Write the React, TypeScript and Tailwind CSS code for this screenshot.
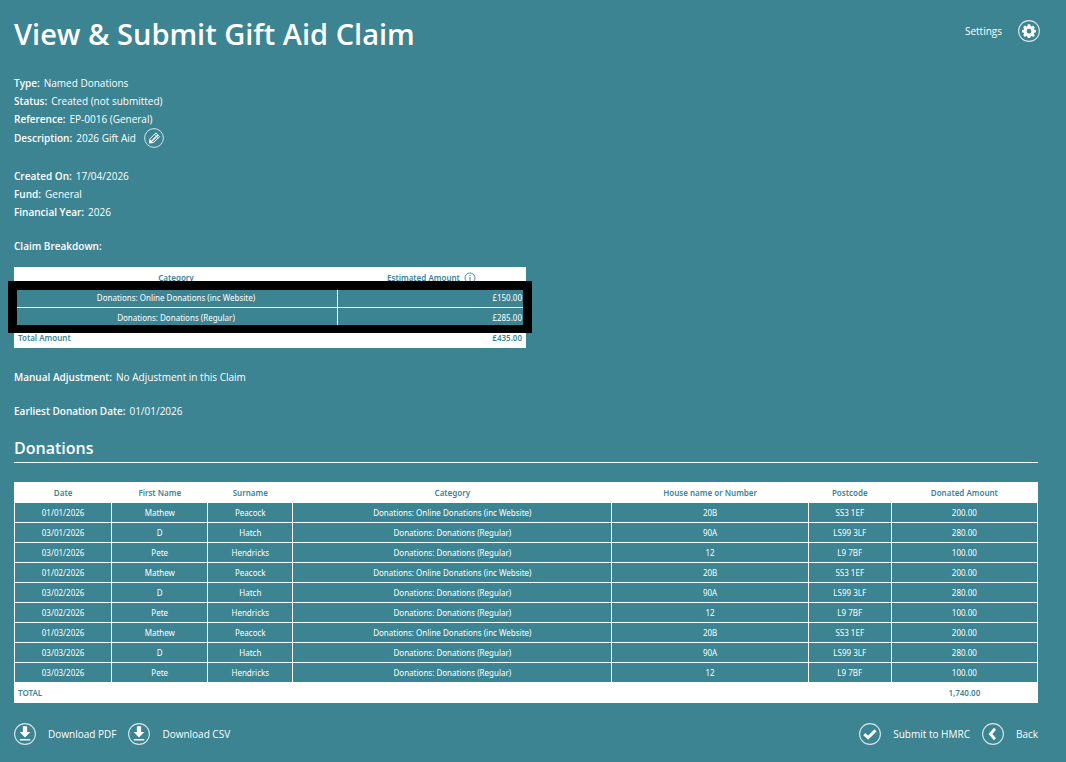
import React from "react";

const donations = [
  ["01/01/2026", "Mathew", "Peacock", "Donations: Online Donations (inc Website)", "20B", "SS3 1EF", "200.00"],
  ["03/01/2026", "D", "Hatch", "Donations: Donations (Regular)", "90A", "LS99 3LF", "280.00"],
  ["03/01/2026", "Pete", "Hendricks", "Donations: Donations (Regular)", "12", "L9 7BF", "100.00"],
  ["01/02/2026", "Mathew", "Peacock", "Donations: Online Donations (inc Website)", "20B", "SS3 1EF", "200.00"],
  ["03/02/2026", "D", "Hatch", "Donations: Donations (Regular)", "90A", "LS99 3LF", "280.00"],
  ["03/02/2026", "Pete", "Hendricks", "Donations: Donations (Regular)", "12", "L9 7BF", "100.00"],
  ["01/03/2026", "Mathew", "Peacock", "Donations: Online Donations (inc Website)", "20B", "SS3 1EF", "200.00"],
  ["03/03/2026", "D", "Hatch", "Donations: Donations (Regular)", "90A", "LS99 3LF", "280.00"],
  ["03/03/2026", "Pete", "Hendricks", "Donations: Donations (Regular)", "12", "L9 7BF", "100.00"],
];

const columns = ["Date", "First Name", "Surname", "Category", "House name or Number", "Postcode", "Donated Amount"];

function Field({ label, children }: { label: string; children?: React.ReactNode }) {
  return (
    <div className="flex items-center gap-1">
      <dt className="font-semibold">{label}:</dt>
      <dd className="flex items-center">{children}</dd>
    </div>
  );
}

function Circle({ children }: { children: React.ReactNode }) {
  return (
    <svg viewBox="0 0 22 22" className="size-[22px] shrink-0" fill="none" aria-hidden="true">
      <circle cx="11" cy="11" r="10.4" stroke="#d5e5e8" strokeWidth="1.1" />
      {children}
    </svg>
  );
}

function DownloadIcon() {
  return (
    <Circle>
      <path d="M8.9 3.2h4.2v5.8h3.2L11 14.6 5.7 9h3.2z" fill="#fff" />
      <path d="M5.8 16.8h10.4" stroke="#fff" strokeWidth="1.4" />
    </Circle>
  );
}

function App() {
  return (
    <div className="min-h-screen bg-[#3c8492] pl-[14px] pr-7 pt-4 pb-4 font-['Open_Sans',sans-serif] text-[10px] leading-[18px] text-white">
      <header className="flex items-start justify-between">
        <h1 className="text-[29px] leading-9 font-semibold">View &amp; Submit Gift Aid Claim</h1>
        <button className="flex items-center gap-4 pt-1 -mr-[2px]">
          Settings
          <Circle>
            <path
              d="M9.8 4.3h2.4l.4 1.7 1 .4 1.5-.9 1.7 1.7-.9 1.5.4 1 1.7.4v2.2l-1.7.4-.4 1 .9 1.5-1.7 1.7-1.5-.9-1 .4-.4 1.7H9.8l-.4-1.7-1-.4-1.5.9-1.7-1.7.9-1.5-.4-1-1.7-.4v-2.2l1.7-.4.4-1-.9-1.5 1.7-1.7 1.5.9 1-.4zM11 8.8a2.4 2.4 0 1 0 0 4.8 2.4 2.4 0 0 0 0-4.8z"
              fill="#fff"
              fillRule="evenodd"
            />
          </Circle>
        </button>
      </header>

      <dl className="mt-[22px]">
        <Field label="Type">Named Donations</Field>
        <Field label="Status">Created (not submitted)</Field>
        <Field label="Reference">EP-0016 (General)</Field>
        <Field label="Description">
          2026 Gift Aid
          <button className="ml-2" aria-label="Edit description">
            <svg viewBox="0 0 20 20" className="size-5" fill="none" aria-hidden="true">
              <circle cx="10" cy="10" r="9.4" stroke="#d5e5e8" />
              <path d="M5.6 11.2l6.3-6.3 3.7 3.7-6.3 6.3" stroke="#fff" strokeLinejoin="round" />
              <path d="M8 13l6-6" stroke="#fff" strokeWidth="1.6" />
              <path d="M5 15.6l.5-4.8 4.2 4.2z" fill="#fff" />
              <path d="M10.4 6.2l4 4" stroke="#fff" strokeWidth=".8" />
            </svg>
          </button>
        </Field>
      </dl>
      <dl className="mt-[19px]">
        <Field label="Created On">17/04/2026</Field>
        <Field label="Fund">General</Field>
        <Field label="Financial Year">2026</Field>
      </dl>

      <h2 className="mt-4 font-semibold">Claim Breakdown:</h2>
      <div className="relative mt-3 w-1/2">
        <table className="w-full table-fixed border-collapse border border-white text-center font-['Noto_Sans',sans-serif] text-[8px] leading-[19px]">
          <colgroup>
            <col className="w-[63.2%]" />
            <col />
          </colgroup>
          <thead className="bg-white text-[#3c8492]">
            <tr>
              <th className="border border-white p-0 font-semibold">Category</th>
              <th className="border border-white p-0 font-semibold">
                <span className="flex items-center justify-center gap-1">
                  Estimated Amount
                  <svg viewBox="0 0 12 12" className="size-3" fill="none" stroke="#3c8492" aria-hidden="true">
                    <circle cx="6" cy="6" r="5" strokeWidth=".9" />
                    <path d="M6 5v4M6 3v1" />
                  </svg>
                </span>
              </th>
            </tr>
          </thead>
          <tbody>
            <tr>
              <td className="border border-white p-0">Donations: Online Donations (inc Website)</td>
              <td className="border border-white py-0 pr-[3px] text-right">£150.00</td>
            </tr>
            <tr>
              <td className="border border-white p-0">Donations: Donations (Regular)</td>
              <td className="border border-white py-0 pr-[3px] text-right">£285.00</td>
            </tr>
          </tbody>
          <tfoot className="bg-white font-semibold text-[#3c8492]">
            <tr>
              <td className="border border-white py-0 pl-[3px] text-left">Total Amount</td>
              <td className="border border-white py-0 pr-[3px] text-right">£435.00</td>
            </tr>
          </tfoot>
        </table>
        <div className="pointer-events-none absolute top-[14px] -right-[6px] bottom-[15px] -left-[6px] border-[9px] border-b-8 border-black" />
      </div>

      <dl className="mt-5 space-y-4">
        <Field label="Manual Adjustment">No Adjustment in this Claim</Field>
        <Field label="Earliest Donation Date">01/01/2026</Field>
      </dl>

      <h2 className="mt-[15px] border-b border-white pb-px text-[16px] leading-[26px] font-semibold">Donations</h2>

      <table className="mt-[19px] w-full table-fixed border-collapse border border-white text-center font-['Noto_Sans',sans-serif] text-[8px] leading-[19px]">
        <colgroup>
          <col className="w-[9.5%]" />
          <col className="w-[9.4%]" />
          <col className="w-[8.3%]" />
          <col className="w-[31.2%]" />
          <col className="w-[19.2%]" />
          <col className="w-[8.1%]" />
          <col />
        </colgroup>
        <thead className="bg-white text-[#3c8492]">
          <tr>
            {columns.map((name) => (
              <th key={name} className="border border-white p-0 font-semibold">
                {name}
              </th>
            ))}
          </tr>
        </thead>
        <tbody>
          {donations.map((row, i) => (
            <tr key={i}>
              {row.map((cell, j) => (
                <td key={j} className="border border-white p-0">
                  {cell}
                </td>
              ))}
            </tr>
          ))}
        </tbody>
        <tfoot className="bg-white font-semibold text-[#3c8492]">
          <tr>
            <td colSpan={6} className="border border-white py-0 pl-[3px] text-left">
              TOTAL
            </td>
            <td className="border border-white p-0">1,740.00</td>
          </tr>
        </tfoot>
      </table>

      <footer className="mt-5 flex justify-between">
        <div className="flex gap-3">
          <button className="flex items-center gap-3">
            <DownloadIcon />
            Download PDF
          </button>
          <button className="flex items-center gap-3">
            <DownloadIcon />
            Download CSV
          </button>
        </div>
        <div className="flex gap-3">
          <button className="flex items-center gap-3">
            <Circle>
              <path d="M5.3 11.2l3.8 3.5 7.4-7.3" stroke="#fff" strokeWidth="3" />
            </Circle>
            Submit to HMRC
          </button>
          <button className="flex items-center gap-3">
            <Circle>
              <path d="M13 5.8L8.4 11l4.6 5.2" stroke="#fff" strokeWidth="2.8" />
            </Circle>
            Back
          </button>
        </div>
      </footer>
    </div>
  );
}

export default App;
